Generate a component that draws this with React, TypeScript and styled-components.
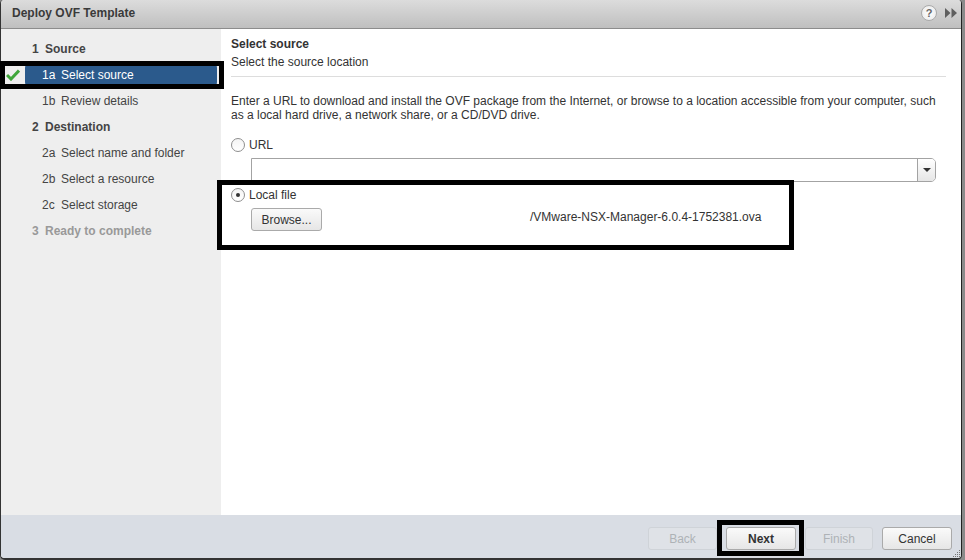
import React from 'react';
import styled, { createGlobalStyle } from 'styled-components';

const Global = createGlobalStyle`
  html, body { margin: 0; padding: 0; background: #fff; }
  body { font-family: "Liberation Sans", Arial, sans-serif; font-size: 12px; color: #333; }
`;

const Page = styled.div`
  position: relative;
  width: 965px;
  height: 560px;
  overflow: hidden;
  background: #8a8a8a;
`;

const Dialog = styled.div`
  width: 962px;
  height: 560px;
  box-sizing: border-box;
  display: flex;
  flex-direction: column;
  background: #fff;
  border-left: 1px solid #333;
  border-right: 1px solid #222;
  border-bottom: 2px solid #333;
  border-radius: 4px 4px 5px 5px;
  overflow: hidden;
`;

const TitleBar = styled.div`
  height: 26px;
  flex-shrink: 0;
  box-sizing: content-box;
  display: flex;
  align-items: center;
  padding: 0 4px 2px 11px;
  background: linear-gradient(#dcdcdc, #bfbfbf);
  border-bottom: 1px solid #8c8c8c;
`;

const Title = styled.div`
  flex: 1;
  font-weight: bold;
  font-size: 12px;
  color: #3a3a3a;
`;

const HelpIcon = styled.div`
  width: 14px;
  height: 14px;
  border-radius: 50%;
  margin-right: 8px;
  display: flex;
  align-items: center;
  justify-content: center;
  font-size: 11px;
  font-weight: bold;
  color: #666;
  background: radial-gradient(#fff, #e8e8e8);
  border: 1px solid #aaa;
`;

const Body = styled.div`
  flex: 1;
  display: flex;
  min-height: 0;
`;

const Sidebar = styled.nav`
  width: 220px;
  flex-shrink: 0;
  box-sizing: border-box;
  padding-top: 7px;
  background: #eeeeee;
  display: flex;
  flex-direction: column;
`;

const NavRow = styled.div<{ $sub?: boolean; $active?: boolean; $off?: boolean }>`
  position: relative;
  height: 26px;
  display: flex;
  align-items: center;
  box-sizing: border-box;
  padding-left: ${p => (p.$sub ? 41 : 31)}px;
  font-weight: ${p => (p.$sub ? 'normal' : 'bold')};
  color: ${p => (p.$active ? '#fff' : p.$off ? '#999' : '#444')};
  ${p => p.$active && `
    margin-left: 24px;
    padding-left: 17px;
    margin-right: 4px;
    margin-top: 2px;
    margin-bottom: 2px;
    height: 22px;
    background: #2b5a8c;
    border-radius: 4px;
  `}
`;

const NavNum = styled.span<{ $sub?: boolean }>`
  display: inline-block;
  width: ${p => (p.$sub ? 19 : 13)}px;
`;

const Check = styled.svg`
  position: absolute;
  left: -19px;
  top: 5px;
`;

const Main = styled.main`
  flex: 1;
  min-width: 0;
  box-sizing: border-box;
  padding: 8px 15px 0 10px;
  display: flex;
  flex-direction: column;
  background: #fff;
`;

const Heading = styled.div`
  font-weight: bold;
  line-height: 14px;
  color: #333;
`;

const SubHeading = styled.div`
  margin-top: 4px;
  line-height: 14px;
  padding-bottom: 7px;
  border-bottom: 1px solid #ddd;
  color: #333;
`;

const Intro = styled.p`
  margin: 17px 0 0;
  line-height: 14px;
  width: 715px;
  color: #333;
`;

const RadioRow = styled.label<{ $top: number }>`
  margin-top: ${p => p.$top}px;
  display: flex;
  align-items: center;
  gap: 4px;
  height: 16px;
  line-height: 16px;
`;

const Radio = styled.span<{ $on?: boolean }>`
  width: 12px;
  height: 12px;
  border-radius: 50%;
  border: 1px solid #8e8e8e;
  background: linear-gradient(#f4f4f4, #fff);
  display: flex;
  align-items: center;
  justify-content: center;
  &::after {
    content: '';
    display: ${p => (p.$on ? 'block' : 'none')};
    width: 4px;
    height: 4px;
    border-radius: 50%;
    background: #333;
  }
`;

const Combo = styled.div`
  margin: 5px 0 0 20px;
  width: 685px;
  height: 24px;
  display: flex;
  box-sizing: border-box;
  border: 1px solid #a3a3a3;
  border-radius: 0 5px 5px 0;
  background: #fff;
`;

const ComboInput = styled.div`
  flex: 1;
`;

const ComboArrow = styled.div`
  width: 17px;
  display: flex;
  align-items: center;
  justify-content: center;
  border-left: 1px solid #a3a3a3;
  border-radius: 0 4px 4px 0;
  background: linear-gradient(#fff, #e6e6e6);
  &::after {
    content: '';
    border-left: 4px solid transparent;
    border-right: 4px solid transparent;
    border-top: 4px solid #333;
  }
`;

const FileRow = styled.div`
  margin: 5px 0 0 20px;
  display: flex;
  align-items: flex-start;
`;

const Button = styled.button<{ $w: number; $off?: boolean; $bold?: boolean }>`
  width: ${p => p.$w}px;
  height: 23px;
  padding: 0;
  box-sizing: border-box;
  font-family: inherit;
  font-size: 12px;
  font-weight: ${p => (p.$bold ? 'bold' : 'normal')};
  color: ${p => (p.$off ? '#aeb2b6' : '#333')};
  border-radius: 3px;
  border: 1px solid ${p => (p.$off ? '#cfd3d8' : '#aaa')};
  background: ${p => (p.$off ? '#dfe2e7' : 'linear-gradient(#fafafa, #e6e6e6)')};
`;

const FilePath = styled.span`
  margin-left: 208px;
  line-height: 18px;
  color: #333;
`;

const Footer = styled.footer`
  height: 43px;
  flex-shrink: 0;
  box-sizing: border-box;
  background: #d9dde4;
  display: flex;
  justify-content: flex-end;
  align-items: flex-start;
  padding: 12px 9px 0 0;
  gap: 9px;
`;

const Callout = styled.div<{ $x: number; $y: number; $w: number; $h: number }>`
  position: absolute;
  left: ${p => p.$x}px;
  top: ${p => p.$y}px;
  width: ${p => p.$w}px;
  height: ${p => p.$h}px;
  box-sizing: border-box;
  border: 5px solid #000;
  pointer-events: none;
`;

const Grip = styled.svg`
  position: absolute;
  right: 4px;
  bottom: 2px;
`;

export default function App() {
  return (
    <Page>
      <Global />
      <Dialog>
        <TitleBar>
          <Title>Deploy OVF Template</Title>
          <HelpIcon>?</HelpIcon>
          <svg width="12" height="10" viewBox="0 0 12 10">
            <path d="M0 0l5.5 5L0 10zM6.5 0L12 5l-5.5 5z" fill="#5f5f5f" />
          </svg>
        </TitleBar>
        <Body>
          <Sidebar>
            <NavRow><NavNum>1</NavNum>Source</NavRow>
            <NavRow $sub $active>
              <Check width="14" height="12" viewBox="0 0 14 12">
                <path d="M1 6L5 10L13 1.5" fill="none" stroke="#3fa63a" strokeWidth="3" />
              </Check>
              <NavNum $sub>1a</NavNum>Select source
            </NavRow>
            <NavRow $sub><NavNum $sub>1b</NavNum>Review details</NavRow>
            <NavRow><NavNum>2</NavNum>Destination</NavRow>
            <NavRow $sub><NavNum $sub>2a</NavNum>Select name and folder</NavRow>
            <NavRow $sub><NavNum $sub>2b</NavNum>Select a resource</NavRow>
            <NavRow $sub><NavNum $sub>2c</NavNum>Select storage</NavRow>
            <NavRow $off><NavNum>3</NavNum>Ready to complete</NavRow>
          </Sidebar>
          <Main>
            <Heading>Select source</Heading>
            <SubHeading>Select the source location</SubHeading>
            <Intro>
              Enter a URL to download and install the OVF package from the Internet, or browse to a location accessible from your computer, such as a local hard drive, a network share, or a CD/DVD drive.
            </Intro>
            <RadioRow $top={15}><Radio />URL</RadioRow>
            <Combo>
              <ComboInput />
              <ComboArrow />
            </Combo>
            <RadioRow $top={5}><Radio $on />Local file</RadioRow>
            <FileRow>
              <Button $w={71}>Browse...</Button>
              <FilePath>/VMware-NSX-Manager-6.0.4-1752381.ova</FilePath>
            </FileRow>
          </Main>
        </Body>
        <Footer>
          <Button $w={69} $off>Back</Button>
          <Button $w={70} $bold>Next</Button>
          <Button $w={68} $off>Finish</Button>
          <Button $w={70}>Cancel</Button>
        </Footer>
      </Dialog>
      <Callout $x={0} $y={61} $w={224} $h={28} />
      <Callout $x={217} $y={180} $w={577} $h={70} />
      <Callout $x={717} $y={520} $w={87} $h={36} />
      <Grip width="8" height="8" viewBox="0 0 8 8">
        <path d="M6 0h1v1H6zM4 2h1v1H4zM6 2h1v1H6zM2 4h1v1H2zM4 4h1v1H4zM6 4h1v1H6zM0 6h1v1H0zM2 6h1v1H2zM4 6h1v1H4zM6 6h1v1H6z" fill="#777" />
      </Grip>
    </Page>
  );
}
